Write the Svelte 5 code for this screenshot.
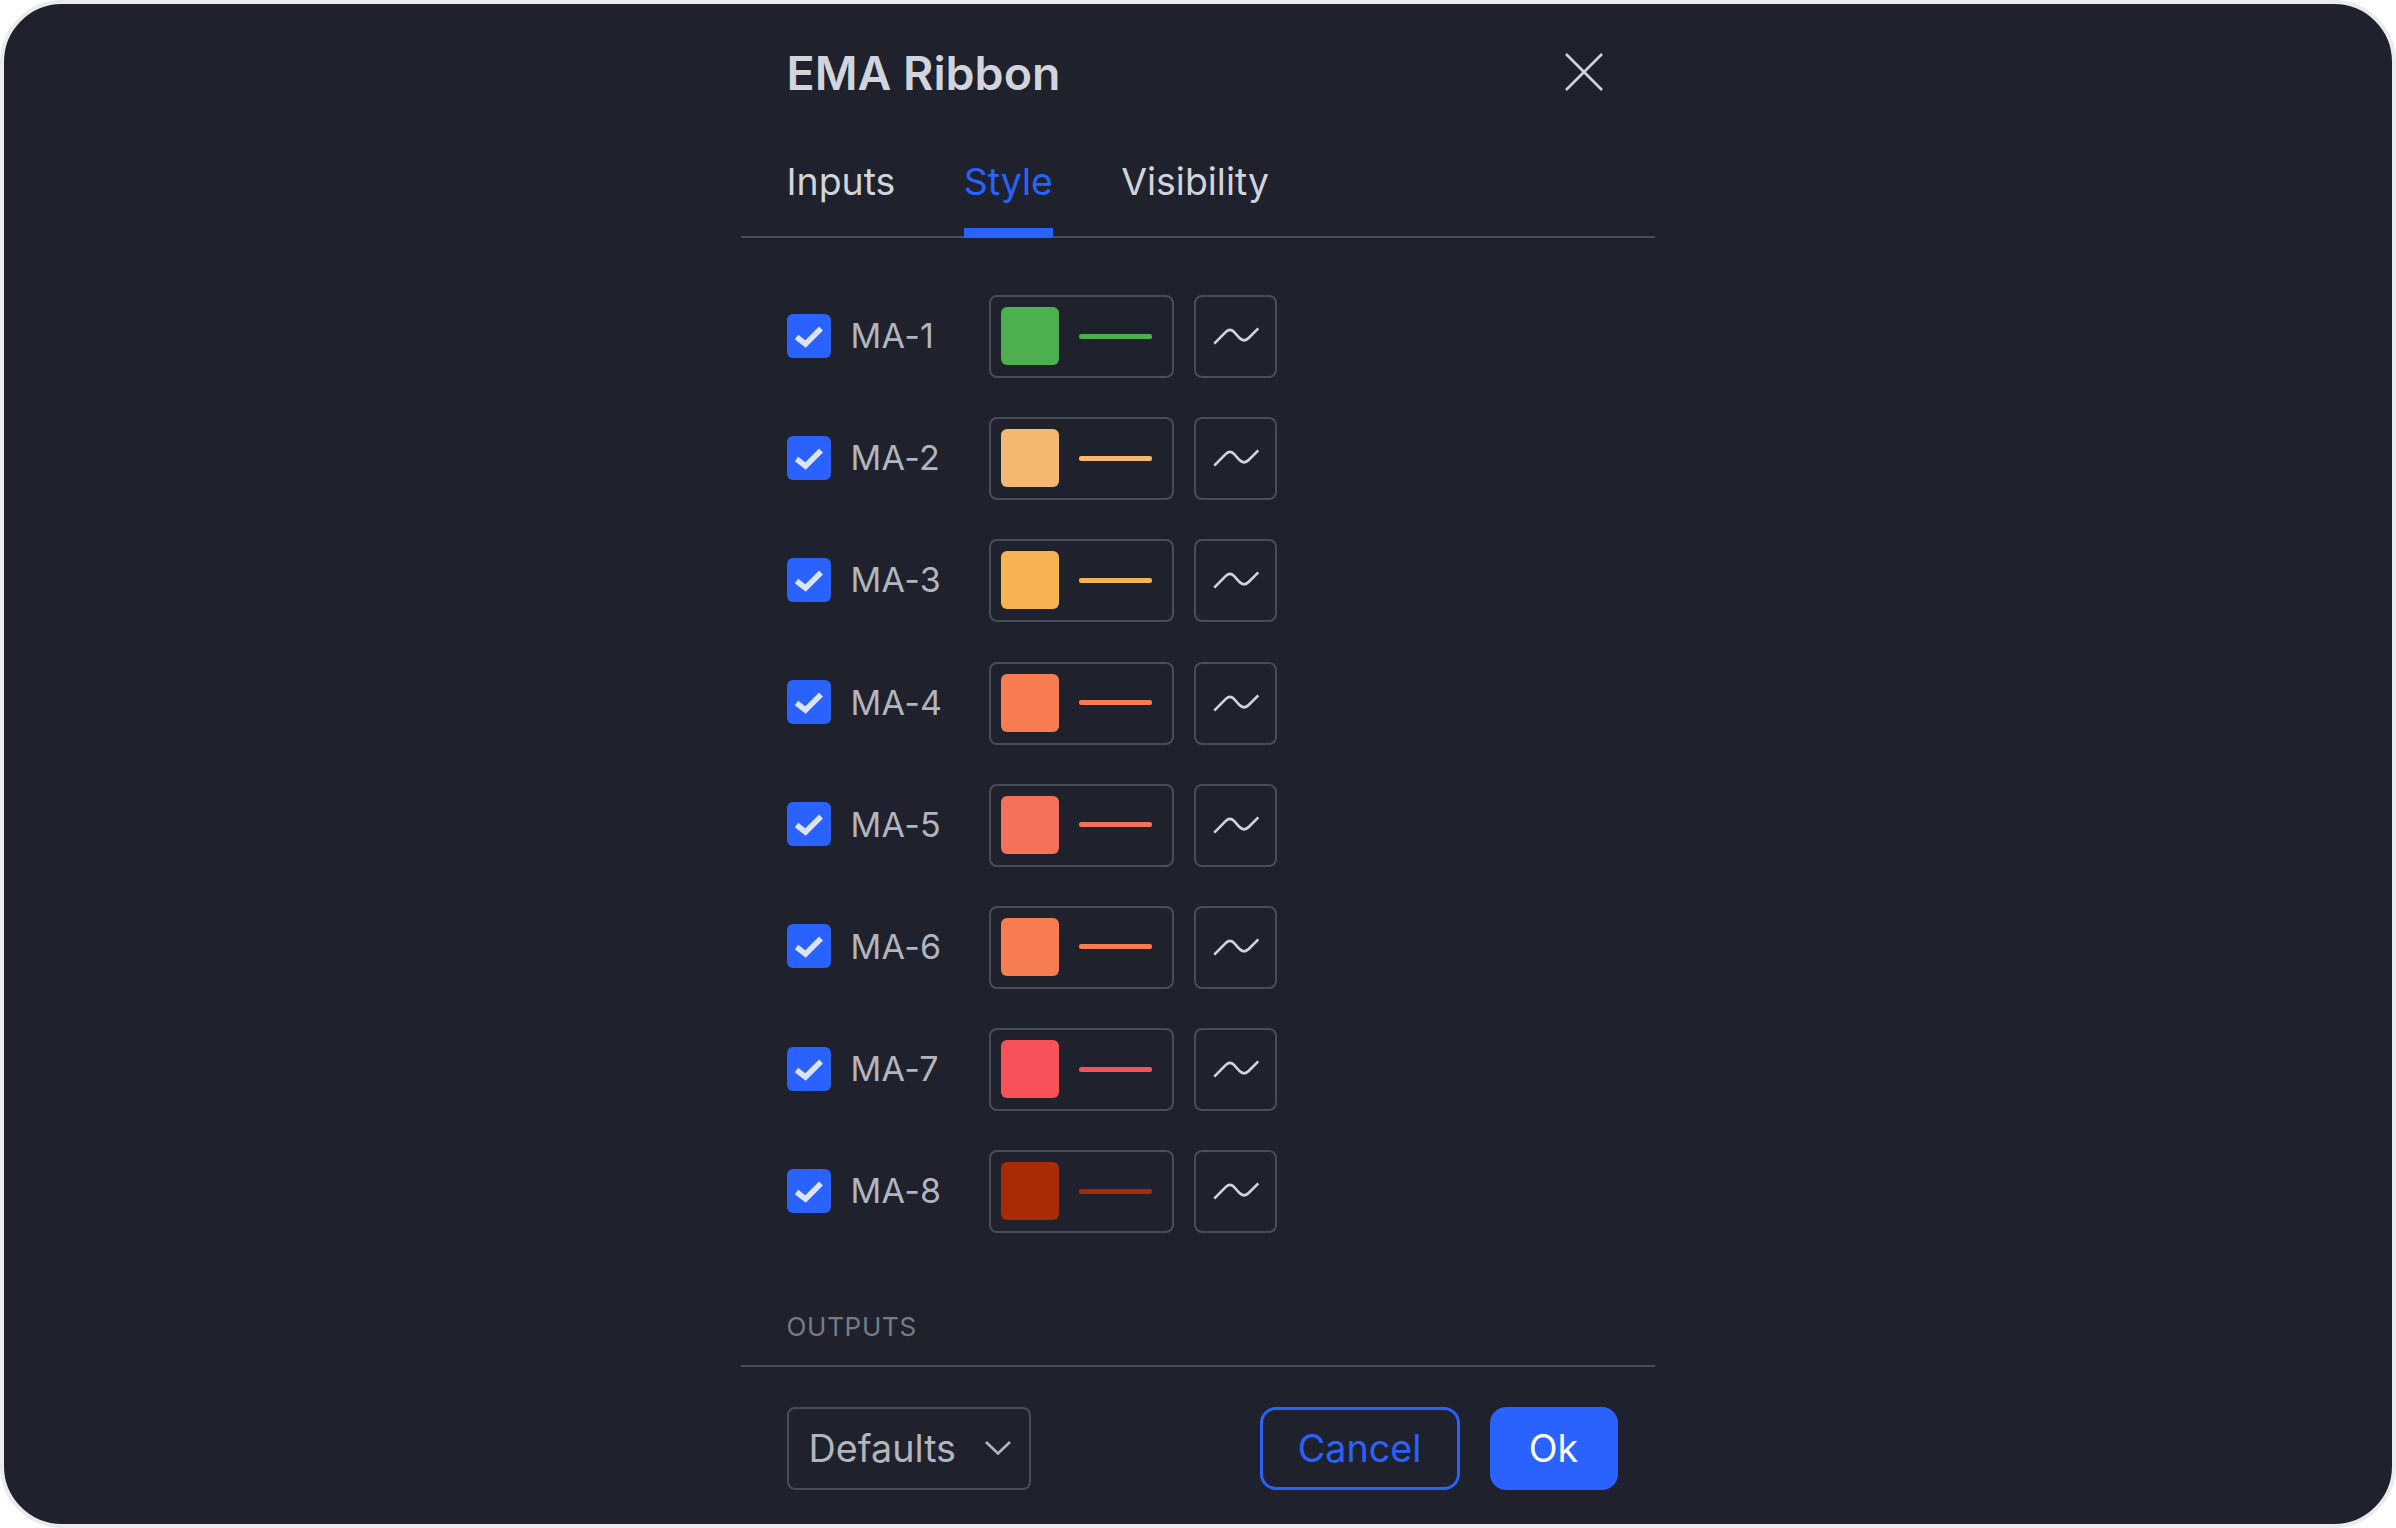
<script>
  const rows = [
    { name: "MA-1", color: "#4caf50" },
    { name: "MA-2", color: "#f4b870" },
    { name: "MA-3", color: "#f7b251" },
    { name: "MA-4", color: "#f77c50" },
    { name: "MA-5", color: "#f47058" },
    { name: "MA-6", color: "#f77c50" },
    { name: "MA-7", color: "#f7525a" },
    { name: "MA-8", color: "#a92b05" },
  ];

  const tabs = ["Inputs", "Style", "Visibility"];
  let activeTab = "Style";
</script>

<div class="frame">
  <div class="dialog">
    <header class="header">
      <h1>EMA Ribbon</h1>
      <button class="close" aria-label="Close">
        <svg width="38" height="38" viewBox="0 0 38 38">
          <path d="M1 1 L37 37 M37 1 L1 37" />
        </svg>
      </button>
    </header>

    <nav class="tabs">
      {#each tabs as tab}
        <span class="tab" class:active={tab === activeTab}>{tab}</span>
      {/each}
    </nav>

    <div class="body">
      {#each rows as row}
        <div class="row">
          <span class="check">
            <svg width="44" height="44" viewBox="0 0 44 44">
              <path d="M9.5 23 L18.5 30 L34 14.5" />
            </svg>
          </span>
          <span class="label">{row.name}</span>
          <button class="color-btn" aria-label="{row.name} color">
            <span class="swatch" style="background: {row.color}"></span>
            <span class="line" style="background: {row.color}"></span>
          </button>
          <button class="plot-btn" aria-label="{row.name} plot type">
            <svg width="79" height="79" viewBox="0 0 78 78">
              <path d="M18 46 L29.5 34.5 Q33.5 30.5 37.5 34.5 L43 40.5 Q47.5 45 52 40.5 L61.5 31" />
            </svg>
          </button>
        </div>
      {/each}
      <div class="section">OUTPUTS</div>
    </div>

    <footer class="footer">
      <button class="select">
        <span>Defaults</span>
        <svg width="26" height="14" viewBox="0 0 26 14">
          <path d="M1 1 L13 12.5 L25 1" />
        </svg>
      </button>
      <div class="actions">
        <button class="btn cancel">Cancel</button>
        <button class="btn ok">Ok</button>
      </div>
    </footer>
  </div>
</div>

<style>
  :global(body) {
    background: #ffffff;
  }

  .frame {
    box-sizing: border-box;
    height: 1528px;
    border: 4px solid #e9ebec;
    border-radius: 62px;
    background: #1f222c;
    display: flex;
    justify-content: center;
    font-family: Inter, "Liberation Sans", sans-serif;
    color: #d1d4dc;
    -webkit-font-smoothing: antialiased;
  }

  .dialog {
    width: 914px;
    margin-left: -1px;
    display: flex;
    flex-direction: column;
  }

  button {
    font-family: inherit;
    background: none;
    padding: 0;
    margin: 0;
    cursor: pointer;
  }

  .header {
    height: 138px;
    padding: 0 52px 0 46px;
    display: flex;
    justify-content: space-between;
    align-items: center;
  }

  h1 {
    margin: 0;
    font-size: 46.5px;
    font-weight: 600;
    line-height: 60px;
    color: #d1d4dc;
  }

  .close {
    border: none;
    width: 38px;
    height: 38px;
    display: flex;
    margin-top: -2px;
  }

  .close path {
    stroke: #d1d4dc;
    stroke-width: 2.6;
    fill: none;
  }

  .tabs {
    height: 96px;
    box-sizing: border-box;
    padding: 0 46px;
    display: flex;
    gap: 68.5px;
    border-bottom: 2px solid #4a4d58;
  }

  .tab {
    box-sizing: border-box;
    height: 96px;
    padding-bottom: 7px;
    border-bottom: 10px solid transparent;
    display: flex;
    align-items: center;
    font-size: 37.4px;
    color: #d1d4dc;
  }

  .tab.active {
    color: #2962ff;
    border-bottom-color: #2962ff;
  }

  .body {
    padding: 57px 46px 0;
    display: flex;
    flex-direction: column;
    gap: 39.2px;
    border-bottom: 2px solid #4a4d58;
  }

  .row {
    display: flex;
    align-items: center;
    height: 83px;
  }

  .check {
    width: 44px;
    height: 44px;
    margin-bottom: 2px;
    border-radius: 6px;
    background: #2962ff;
    display: flex;
  }

  .check path {
    stroke: #dde3f6;
    stroke-width: 5.5;
    fill: none;
  }

  .label {
    width: 137px;
    margin-left: 20px;
    margin-right: 1px;
    padding-bottom: 2px;
    font-size: 34px;
    letter-spacing: 0.3px;
    color: #b2b5be;
  }

  .color-btn {
    box-sizing: border-box;
    width: 185px;
    height: 83px;
    border: 2px solid #4a4d58;
    border-radius: 8px;
    padding: 0 10px 1px;
    display: flex;
    align-items: center;
    gap: 20px;
  }

  .swatch {
    width: 58px;
    height: 58px;
    border-radius: 6px;
  }

  .line {
    width: 73px;
    height: 5px;
    border-radius: 2px;
  }

  .plot-btn {
    box-sizing: border-box;
    width: 83px;
    height: 83px;
    margin-left: 20px;
    border: 2px solid #4a4d58;
    border-radius: 8px;
    display: flex;
  }

  .plot-btn path {
    stroke: #d1d4dc;
    stroke-width: 2.6;
    fill: none;
  }

  .section {
    margin-top: 38px;
    margin-bottom: 22px;
    font-size: 26px;
    line-height: 32px;
    letter-spacing: 0.7px;
    color: #787b86;
  }

  .footer {
    padding: 40px 37px 0 46px;
    display: flex;
    justify-content: space-between;
  }

  .select {
    box-sizing: border-box;
    width: 244px;
    height: 83px;
    border: 2px solid #4a4d58;
    border-radius: 8px;
    padding: 0 18px 0 20px;
    display: flex;
    align-items: center;
    justify-content: space-between;
    font-size: 37.7px;
    color: #b2b5be;
  }

  .select path {
    stroke: #b2b5be;
    stroke-width: 2.6;
    fill: none;
  }

  .actions {
    display: flex;
    gap: 30px;
  }

  .btn {
    box-sizing: border-box;
    height: 83px;
    border-radius: 16px;
    font-size: 37.7px;
  }

  .cancel {
    width: 200px;
    border: 3px solid #2962ff;
    color: #2962ff;
  }

  .ok {
    width: 128px;
    border: none;
    background: #2962ff;
    color: #ffffff;
  }
</style>
